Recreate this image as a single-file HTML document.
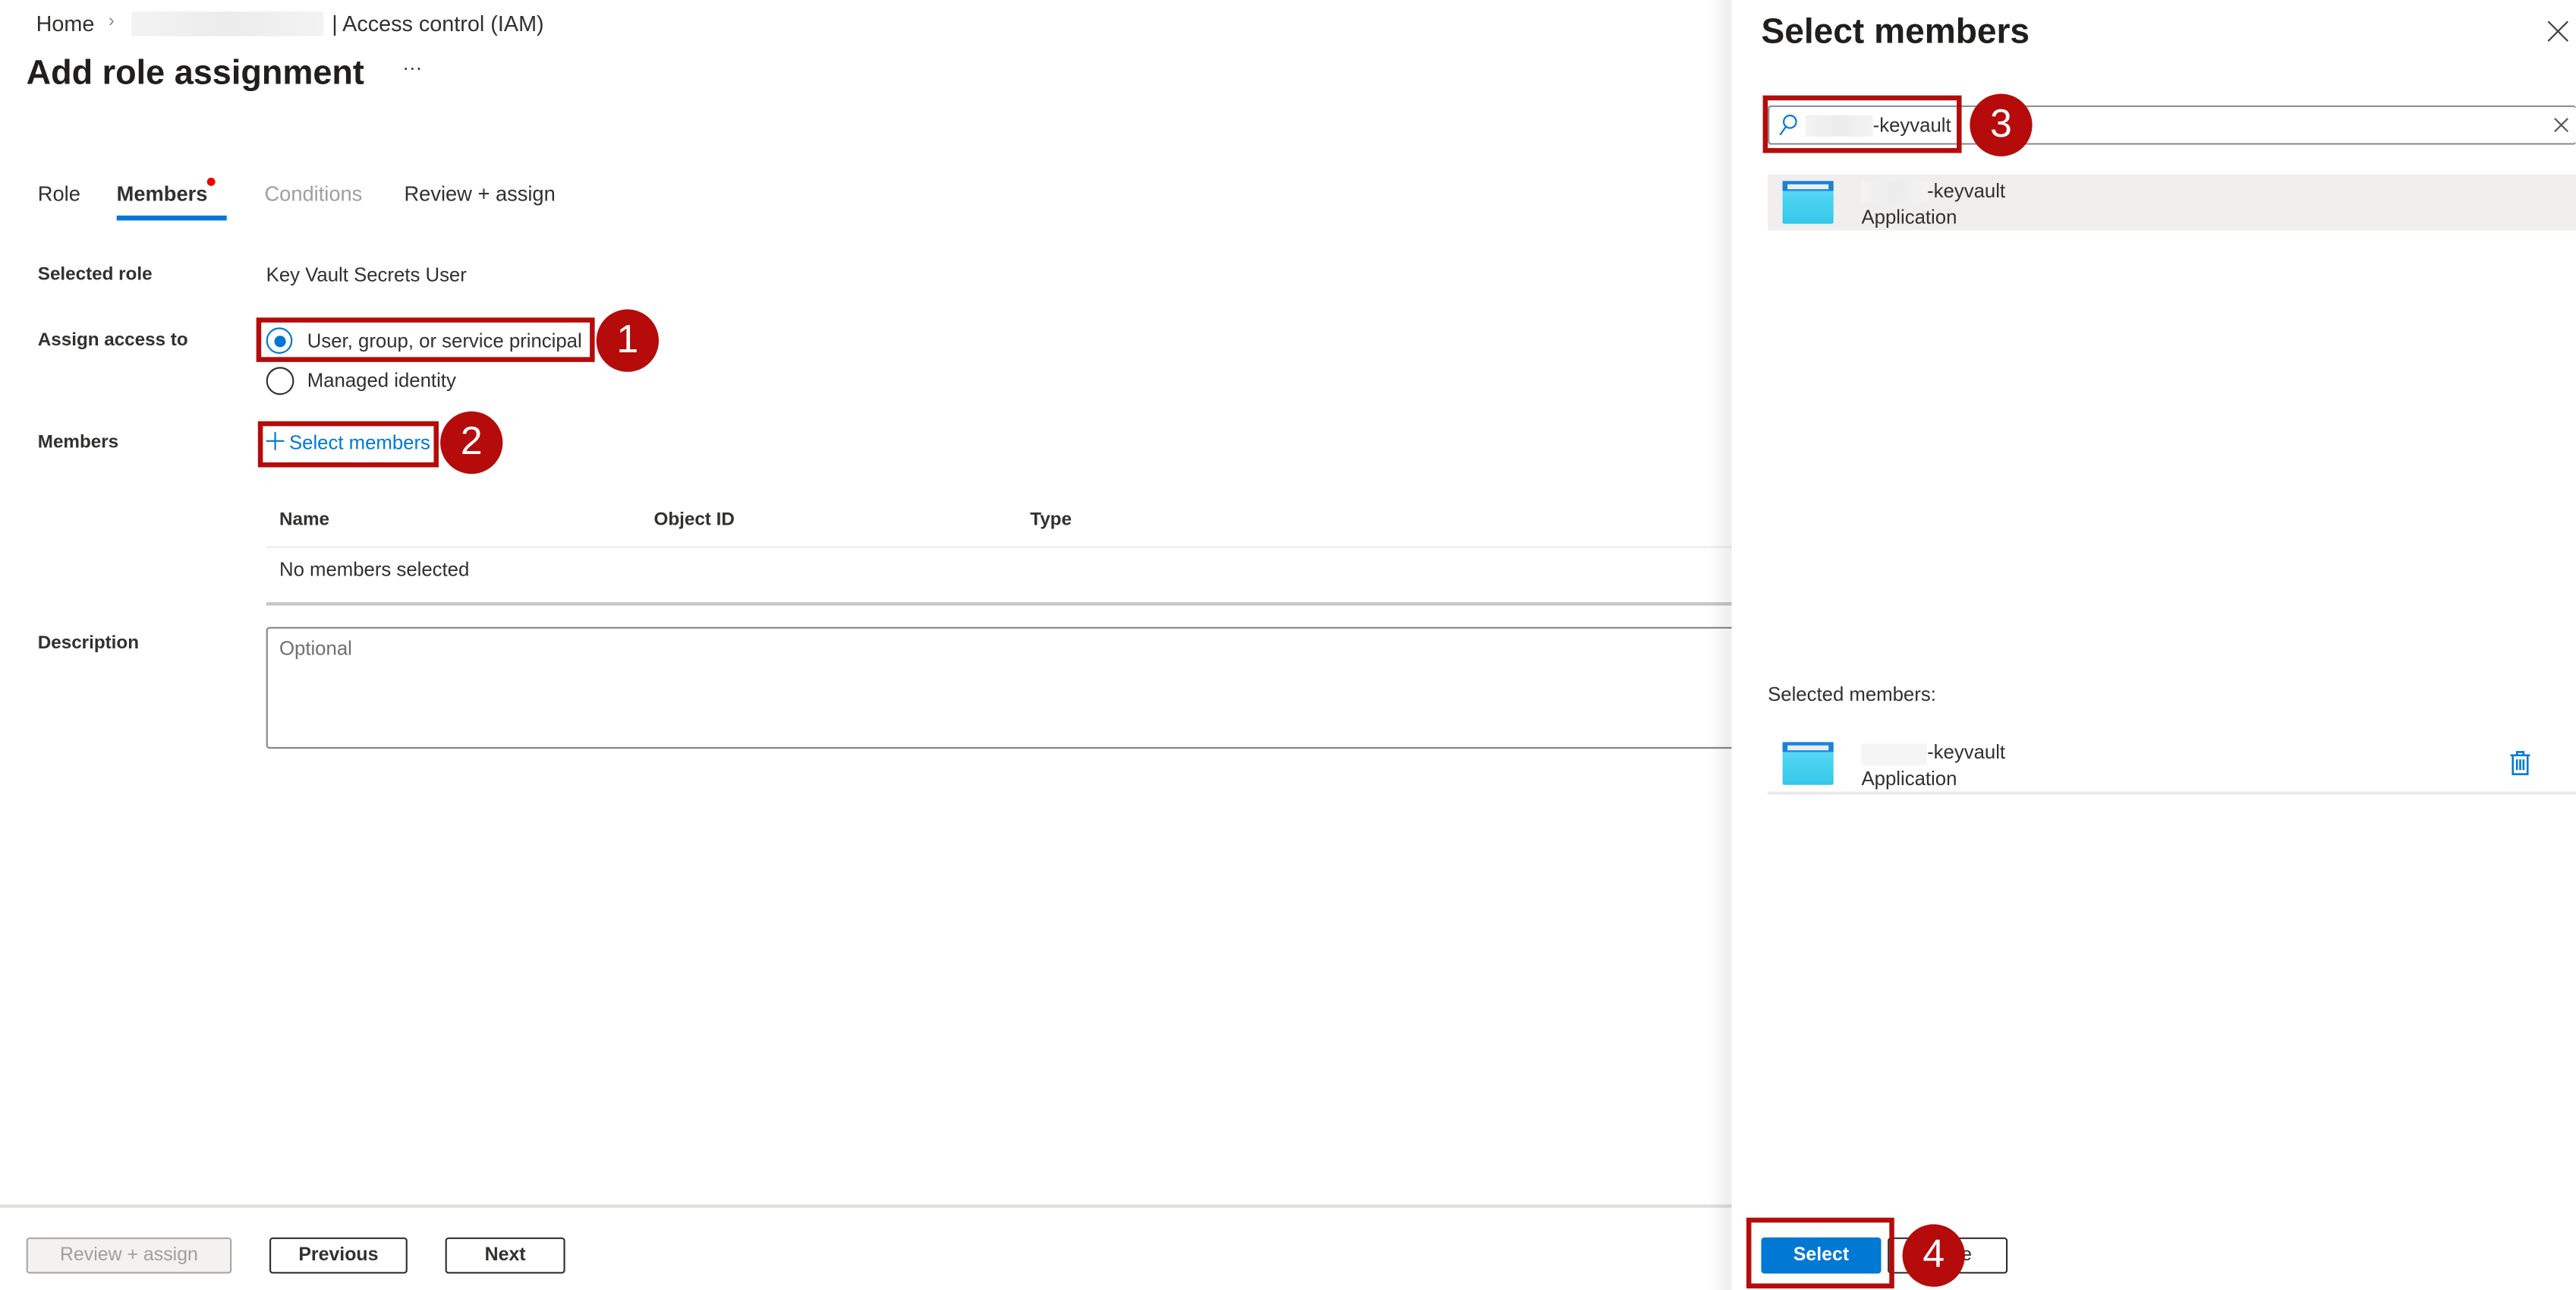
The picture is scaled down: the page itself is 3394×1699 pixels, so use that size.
<!DOCTYPE html>
<html><head><meta charset="utf-8"><style>
html,body{margin:0;padding:0;width:3394px;height:1698px;overflow:hidden;background:#fff}
#w{position:absolute;left:0;top:0;width:1568px;height:784px;transform:scale(2.1646,2.1672);transform-origin:0 0;font-family:"Liberation Sans",sans-serif;color:#323130;font-size:11.9px}
.a{position:absolute;white-space:nowrap}
.b{font-weight:bold;font-size:11.2px}
.blur{position:absolute;background:linear-gradient(90deg,#f3f3f3,#ececec,#f3f3f3)}
.rb{position:absolute;border:3px solid #b50b0b;box-sizing:border-box}
.num{position:absolute;width:38px;height:38px;border-radius:50%;background:#b50b0b;color:#fff;font-size:24px;text-align:center;line-height:38px}
.btn{position:absolute;box-sizing:border-box;border:1px solid #323130;border-radius:2px;text-align:center;line-height:20px;font-weight:bold;font-size:11.5px}
.ic{position:absolute;width:31px;height:26px;border-radius:1px;background:linear-gradient(#5fdaf6,#33c7ea)}
.ic:before{content:"";position:absolute;left:0;top:0;width:31px;height:6px;background:#1a82d8}
.ic:after{content:"";position:absolute;left:3px;top:1.5px;width:25px;height:3px;background:#e8eef4}
</style></head><body><div id="w">
<div class="a" style="left:22px;top:7px;font-size:13.3px">Home</div>
<div class="a" style="left:66px;top:7px;font-size:11px;color:#888">›</div>
<div class="blur" style="left:80px;top:7px;width:117px;height:15px"></div>
<div class="a" style="left:202px;top:7px;font-size:13.3px">| Access control (IAM)</div>
<div class="a" style="left:16px;top:33px;font-size:20.8px;font-weight:bold;color:#201f1e">Add role assignment</div>
<div class="a" style="left:245px;top:34px;font-size:12px">···</div>

<div class="a" style="left:23px;top:111px;font-size:12.6px">Role</div>
<div class="a" style="left:71px;top:111px;font-size:12.6px;font-weight:bold">Members</div>
<div class="a" style="left:126px;top:108px;width:5px;height:5px;border-radius:50%;background:#e00"></div>
<div class="a" style="left:71px;top:131px;width:67px;height:3px;background:#0078d4"></div>
<div class="a" style="left:161px;top:111px;font-size:12.6px;color:#a19f9d">Conditions</div>
<div class="a" style="left:246px;top:111px;font-size:12.6px">Review + assign</div>

<div class="a b" style="left:23px;top:161px">Selected role</div>
<div class="a" style="left:162px;top:160px">Key Vault Secrets User</div>
<div class="a b" style="left:23px;top:201px">Assign access to</div>
<div class="a" style="left:162px;top:199px;width:16px;height:16px;border:1px solid #0078d4;border-radius:50%;box-sizing:border-box"></div>
<div class="a" style="left:166.5px;top:203.5px;width:7px;height:7px;background:#0078d4;border-radius:50%"></div>
<div class="a" style="left:187px;top:200px">User, group, or service principal</div>
<div class="rb" style="left:156px;top:193px;width:206px;height:27px"></div>
<div class="num" style="left:363px;top:188px">1</div>
<div class="a" style="left:162px;top:223px;width:17px;height:17px;border:1px solid #323130;border-radius:50%;box-sizing:border-box"></div>
<div class="a" style="left:187px;top:224px">Managed identity</div>

<div class="a b" style="left:23px;top:263px">Members</div>
<svg class="a" style="left:162px;top:262px" width="11" height="12"><path d="M5.5 0.5V11.5M0 6H11" stroke="#0078d4" stroke-width="1"/></svg>
<div class="a" style="left:176px;top:262px;color:#0078d4">Select members</div>
<div class="rb" style="left:157px;top:256px;width:110px;height:28px"></div>
<div class="num" style="left:268px;top:250px">2</div>

<div class="a b" style="left:170px;top:310px">Name</div>
<div class="a b" style="left:398px;top:310px">Object ID</div>
<div class="a b" style="left:627px;top:310px">Type</div>
<div class="a" style="left:162px;top:332px;width:900px;height:1px;background:#edebe9"></div>
<div class="a" style="left:170px;top:339px">No members selected</div>
<div class="a" style="left:162px;top:366px;width:900px;height:1.5px;background:#c8c6c4"></div>
<div class="a b" style="left:23px;top:385px">Description</div>
<div class="a" style="left:162px;top:381px;width:900px;height:74px;border:1px solid #8a8886;border-radius:2px;box-sizing:border-box"></div>
<div class="a" style="left:170px;top:387px;color:#707070">Optional</div>

<div class="a" style="left:0;top:732px;width:1568px;height:1.5px;background:#e1dfdd"></div>
<div class="btn" style="left:16px;top:752px;width:125px;height:22px;background:#f3f2f1;border-color:#a8a8a8;color:#a19f9d;font-weight:normal">Review + assign</div>
<div class="btn" style="left:164px;top:752px;width:84px;height:22px">Previous</div>
<div class="btn" style="left:271px;top:752px;width:73px;height:22px">Next</div>

<div class="a" style="left:1040px;top:0;width:14px;height:784px;background:linear-gradient(90deg,rgba(0,0,0,0),rgba(0,0,0,.07))"></div>
<div class="a" style="left:1054px;top:0;width:514px;height:784px;background:#fff"></div>
<div class="a" style="left:1072px;top:7px;font-size:21.3px;font-weight:bold;color:#201f1e">Select members</div>
<svg class="a" style="left:1550px;top:12px" width="14" height="14"><path d="M1 1L13 13M13 1L1 13" stroke="#444" stroke-width="1"/></svg>

<div class="a" style="left:1076px;top:64px;width:492px;height:24px;border:1px solid #8a8886;border-right:none;border-radius:2px;box-sizing:border-box"></div>
<svg class="a" style="left:1082px;top:69px" width="12" height="14"><circle cx="7.5" cy="5" r="3.8" fill="none" stroke="#0078d4" stroke-width="1"/><path d="M5 8L1.5 13" stroke="#0078d4" stroke-width="1"/></svg>
<div class="blur" style="left:1099px;top:70px;width:41px;height:13px"></div>
<div class="a" style="left:1140px;top:69px">-keyvault</div>
<svg class="a" style="left:1554px;top:71px" width="10" height="10"><path d="M1 1L9 9M9 1L1 9" stroke="#555" stroke-width="1"/></svg>
<div class="rb" style="left:1073px;top:58px;width:121px;height:35px"></div>
<div class="num" style="left:1199px;top:57px">3</div>

<div class="a" style="left:1076px;top:106px;width:492px;height:34px;background:#f0efee"></div>
<div class="ic" style="left:1085px;top:110px"></div>
<div class="blur" style="left:1133px;top:110px;width:41px;height:13px"></div>
<div class="a" style="left:1173px;top:109px">-keyvault</div>
<div class="a" style="left:1133px;top:125px">Application</div>

<div class="a" style="left:1076px;top:415px">Selected members:</div>
<div class="ic" style="left:1085px;top:451px"></div>
<div class="blur" style="left:1133px;top:452px;width:40px;height:13px;background:#f5f5f5"></div>
<div class="a" style="left:1173px;top:450px">-keyvault</div>
<div class="a" style="left:1133px;top:466px">Application</div>
<svg class="a" style="left:1527px;top:456px" width="14" height="16"><path d="M1 3H13M5 3V1H9V3M2.5 3.5V14.5H11.5V3.5M5 5.5V12M7 5.5V12M9 5.5V12" fill="none" stroke="#0078d4" stroke-width="1.2"/></svg>
<div class="a" style="left:1076px;top:481px;width:492px;height:1.5px;background:#edebe9"></div>

<div class="btn" style="left:1149px;top:752px;width:73px;height:22px;font-weight:normal">Close</div>
<div class="btn" style="left:1072px;top:752px;width:73px;height:22px;background:#0078d4;border-color:#0078d4;color:#fff">Select</div>
<div class="rb" style="left:1063px;top:740px;width:90px;height:43px"></div>
<div class="num" style="left:1158px;top:744px">4</div>
</div></body></html>
